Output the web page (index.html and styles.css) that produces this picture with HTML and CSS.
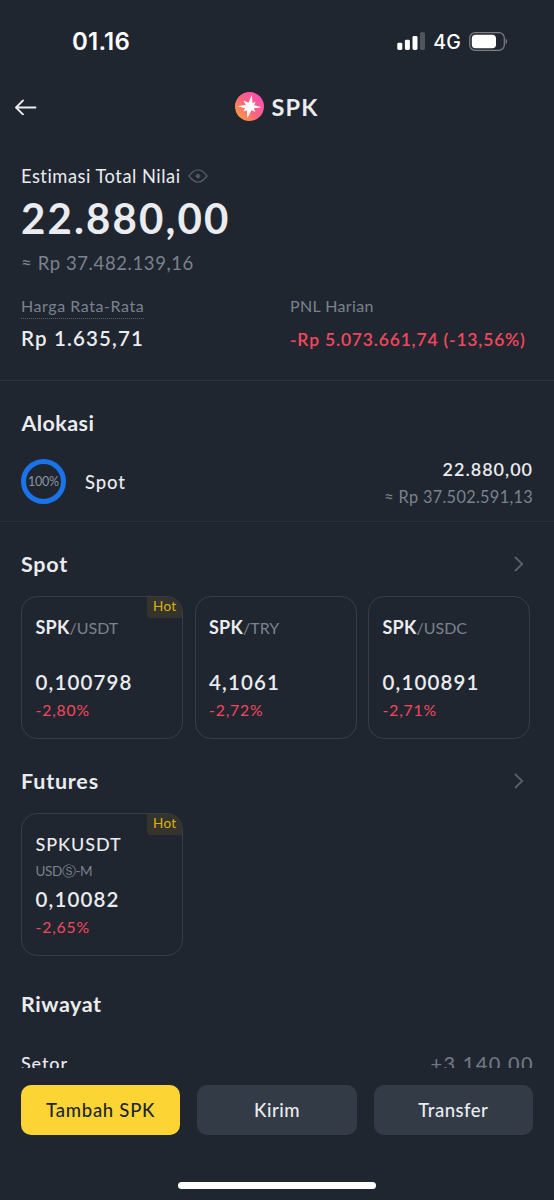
FILE: index.html
```html
<!DOCTYPE html>
<html lang="id">
<head>
<meta charset="utf-8">
<title>SPK</title>
<link rel="stylesheet" href="styles.css">
</head>
<body>
<div class="app">
  <header class="status">
    <span class="clock">01.16</span>
    <div class="indicators">
      <svg class="signal" width="28" height="18" viewBox="0 0 28 18"><rect x="0.3" y="10.8" width="5" height="7.2" rx="1.4" fill="#fff"/><rect x="7.9" y="7.8" width="5" height="10.2" rx="1.4" fill="#fff"/><rect x="15.5" y="4" width="5" height="14" rx="1.4" fill="#fff"/><rect x="23" y="0.2" width="5" height="17.8" rx="1.4" fill="#50565e"/></svg>
      <span class="network">4G</span>
      <svg class="battery" width="39" height="19" viewBox="0 0 39 19"><rect x="0.7" y="0.7" width="34.6" height="17.6" rx="5.4" fill="none" stroke="#7b8087" stroke-width="1.2"/><rect x="2.8" y="2.8" width="24.2" height="13.4" rx="3.8" fill="#fff"/><path d="M36.6 6.6c1.9.8 1.9 5 0 5.800z" fill="#7b8087"/></svg>
    </div>
  </header>

  <nav class="nav">
    <svg class="back" width="22" height="16" viewBox="0 0 22 16" fill="none" stroke="#eaecef" stroke-width="1.8" stroke-linecap="round" stroke-linejoin="round"><path d="M20.500 8.500H1.200M8 1.500L1 8.500l7 7"/></svg>
    <div class="coin">
      <svg width="29" height="29" viewBox="0 0 86 86"><defs><linearGradient id="coin" x1="0.1" y1="0.85" x2="0.9" y2="0.15"><stop offset="0" stop-color="#ff9a45"/><stop offset="0.45" stop-color="#f9667c"/><stop offset="1" stop-color="#fb4fb4"/></linearGradient></defs><circle cx="43" cy="43" r="43" fill="url(#coin)"/><path d="M50 9L52 33L61 29L57 39L79 45L56 48L60 59L49 54L37 77L35 54L25 58L30 48L8 42L32 38L25 25L40 32Z" fill="#fff"/></svg>
      <span class="coin-name">SPK</span>
    </div>
  </nav>

  <main class="content">
    <section class="summary">
      <div class="total-label">
        <span>Estimasi Total Nilai</span>
        <svg width="20" height="14" viewBox="0 0 20 14" fill="none" stroke="#525966" stroke-width="1.4" stroke-linejoin="round"><path d="M1 7Q5.500 0.900 10 0.900T19 7Q14.500 13.100 10 13.100T1 7Z"/><path d="M10 4.300L12.700 7L10 9.700L7.300 7Z" fill="#525966" stroke="none"/></svg>
      </div>
      <div class="total">22.880,00</div>
      <div class="total-fiat">≈ Rp 37.482.139,16</div>
      <div class="metrics">
        <div>
          <div class="metric-label"><span class="hint">Harga Rata-Rata</span></div>
          <div class="average">Rp 1.635,71</div>
        </div>
        <div>
          <div class="metric-label pnl-label">PNL Harian</div>
          <div class="pnl">-Rp 5.073.661,74 (-13,56%)</div>
        </div>
      </div>
    </section>

    <section class="allocation">
      <h2 class="alloc-title">Alokasi</h2>
      <div class="alloc-row">
        <div class="ring"><span>100%</span></div>
        <span class="alloc-name">Spot</span>
        <div class="alloc-values">
          <div class="alloc-amount">22.880,00</div>
          <div class="alloc-fiat">≈ Rp 37.502.591,13</div>
        </div>
      </div>
    </section>

    <section class="market">
      <div class="section-head"><h2 class="spot-title">Spot</h2><svg width="10" height="16" viewBox="0 0 10 16" fill="none" stroke="#596069" stroke-width="1.8"><path d="M1 1l7.200 7L1 15"/></svg></div>
      <div class="cards">
        <article class="card">
          <span class="hot">Hot</span>
          <div class="pair"><b>SPK</b><span>/USDT</span></div>
          <div class="price">0,100798</div>
          <div class="change">-2,80%</div>
        </article>
        <article class="card">
          <div class="pair"><b>SPK</b><span>/TRY</span></div>
          <div class="price">4,1061</div>
          <div class="change">-2,72%</div>
        </article>
        <article class="card">
          <div class="pair"><b>SPK</b><span>/USDC</span></div>
          <div class="price">0,100891</div>
          <div class="change">-2,71%</div>
        </article>
      </div>
    </section>

    <section class="market">
      <div class="section-head"><h2 class="futures-title">Futures</h2><svg width="10" height="16" viewBox="0 0 10 16" fill="none" stroke="#596069" stroke-width="1.8"><path d="M1 1l7.200 7L1 15"/></svg></div>
      <div class="cards">
        <article class="card">
          <span class="hot">Hot</span>
          <div class="contract">SPKUSDT</div>
          <div class="margin-type">USDⓈ-M</div>
          <div class="price">0,10082</div>
          <div class="change">-2,65%</div>
        </article>
      </div>
    </section>

    <section class="history">
      <h2 class="history-title">Riwayat</h2>
      <div class="history-row"><span>Setor</span><span class="history-amount">+3.140,00</span></div>
    </section>
  </main>

  <footer class="footer">
    <div class="actions">
      <button class="btn primary">Tambah SPK</button>
      <button class="btn">Kirim</button>
      <button class="btn">Transfer</button>
    </div>
    <div class="home-bar"></div>
  </footer>
</div>
</body>
</html>
```
FILE: styles.css
```css
* { box-sizing: border-box; }

body {
  margin: 0;
  background: #202630;
  color: #eaecef;
  font-family: "Lato", sans-serif;
}

h2 {
  margin: 0;
  font-size: 21.5px;
  font-weight: 700;
  line-height: 28px;
}

svg { display: block; flex: none; }

.app {
  display: flex;
  flex-direction: column;
  height: 1200px;
  overflow: hidden;
  white-space: nowrap;
}

/* Status bar */
.status {
  display: flex;
  justify-content: space-between;
  align-items: center;
  height: 82px;
  padding: 0 46px 0 72px;
  color: #fff;
  font-family: "Inter", sans-serif;
}
.clock { font-size: 24px; font-weight: 600; letter-spacing: 0.2px; }
.indicators { display: flex; align-items: center; }
.network { margin: 2px 8px 0 8.500px; font-size: 19.5px; font-weight: 500; letter-spacing: 0.2px; }

/* Navigation */
.nav {
  display: grid;
  grid-template-columns: 1fr auto 1fr;
  align-items: center;
  height: 49px;
  padding-left: 15px;
  padding-right: 17px;
}
.coin { display: flex; align-items: center; gap: 8px; }
.coin-name { font-size: 23.5px; font-weight: 700; line-height: 28px; letter-spacing: 1.2px; margin-right: -1.2px; }

.content { flex: 1; min-height: 0; overflow: hidden; }

/* Balance summary */
.summary { height: 250px; padding: 33px 21px 0; border-bottom: 1px solid #2c333d; }
.total-label { display: flex; align-items: center; gap: 7px; font-size: 18.3px; line-height: 24px; letter-spacing: 0.52px; }
.total { margin-top: 5px; font-size: 42px; font-weight: 700; line-height: 51px; letter-spacing: 2.13px; }
.total-fiat { margin-top: 7px; color: #7a828e; font-size: 18.5px; line-height: 24px; letter-spacing: 0.59px; }
.metrics { display: grid; grid-template-columns: 269px 1fr; margin-top: 21px; }
.metric-label { height: 23px; color: #7a828e; font-size: 16px; line-height: 20px; letter-spacing: 0.57px; }
.hint { display: inline-block; height: 23px; border-bottom: 1px dotted #5b626d; }
.pnl-label { letter-spacing: 0.37px; }
.average { margin-top: 8px; font-size: 20.5px; font-weight: 600; line-height: 23px; letter-spacing: 1.14px; }
.pnl { margin-top: 8.500px; color: #f6465d; font-size: 17.5px; font-weight: 600; line-height: 24px; letter-spacing: 0.81px; }

/* Allocation */
.allocation { height: 141px; padding: 28px 21px 0; border-bottom: 1px solid #2a303a; }
.alloc-title { letter-spacing: 0.42px; padding-left: 0.500px; }
.alloc-row { display: flex; align-items: center; height: 54px; margin-top: 19px; }
.ring {
  display: flex;
  align-items: center;
  justify-content: center;
  width: 45px;
  height: 45px;
  margin-bottom: 3px;
  border: 5px solid #1a73e8;
  border-radius: 50%;
  color: #8b929d;
  font-size: 12.5px;
  letter-spacing: -0.25px;
}
.alloc-name { flex: 1; margin: 0 0 2px 19px; font-size: 18.5px; font-weight: 500; letter-spacing: 0.9px; }
.alloc-values { text-align: right; line-height: 27px; }
.alloc-amount { font-size: 18px; font-weight: 600; letter-spacing: 0.99px; }
.alloc-fiat { color: #7a828e; font-size: 16.3px; letter-spacing: 0.33px; }

/* Markets */
.market { padding: 28px 21px 0; }
.section-head { display: flex; justify-content: space-between; align-items: center; padding-right: 9px; }
.spot-title { letter-spacing: 0.75px; }
.futures-title { letter-spacing: 0.8px; }
.cards { display: grid; grid-template-columns: repeat(3, 162px); gap: 11.500px; margin-top: 18px; }
.card {
  position: relative;
  display: flex;
  flex-direction: column;
  height: 143px;
  padding: 18px 0 0 13.500px;
  border: 1px solid #373e48;
  border-radius: 16px;
  overflow: hidden;
}
.hot {
  position: absolute;
  top: 0;
  right: 0;
  width: 35px;
  height: 20.500px;
  padding-left: 6px;
  border-radius: 0 0 0 4px;
  background: #35332e;
  color: #dcb30e;
  font-size: 13.5px;
  line-height: 19px;
  letter-spacing: 0.3px;
}
.pair { height: 24px; margin-bottom: 29px; line-height: 24px; }
.pair b { font-size: 18px; font-weight: 700; letter-spacing: 0.2px; }
.pair span { color: #7a828e; font-size: 16px; letter-spacing: 0; }
.contract { height: 24px; font-size: 18px; font-weight: 500; line-height: 24px; letter-spacing: 0.95px; }
.margin-type { height: 18px; margin: 6px 0 5px; color: #7a828e; font-size: 13.5px; line-height: 18px; letter-spacing: -0.4px; }
.price { font-size: 20.5px; font-weight: 600; line-height: 28px; letter-spacing: 1.14px; }
.change { margin-top: 4px; color: #f6465d; font-size: 15.7px; line-height: 20px; letter-spacing: 0.86px; }

/* History */
.history { padding: 34px 21px 0; }
.history-title { letter-spacing: 0.55px; }
.history-row { display: flex; justify-content: space-between; margin-top: 33px; font-size: 18px; font-weight: 500; line-height: 24px; letter-spacing: 0.87px; }
.history-amount { margin-right: -1px; color: #6f7783; font-size: 20px; letter-spacing: 1.45px; }

/* Bottom actions */
.footer { height: 132.5px; padding: 17px 21px 0; background: #202630; }
.actions { display: grid; grid-template-columns: repeat(3, 1fr); gap: 17px; }
.btn {
  height: 50.5px;
  padding: 0;
  border: 0;
  border-radius: 10px;
  background: #333b47;
  color: #eaecef;
  font: 500 18.5px "Lato", sans-serif;
  letter-spacing: 0.5px;
}
.btn.primary { background: #fcd535; color: #202630; letter-spacing: 0.74px; }
.home-bar { width: 198px; height: 7px; margin: 46.500px auto 0; border-radius: 4px; background: #fff; }
```
